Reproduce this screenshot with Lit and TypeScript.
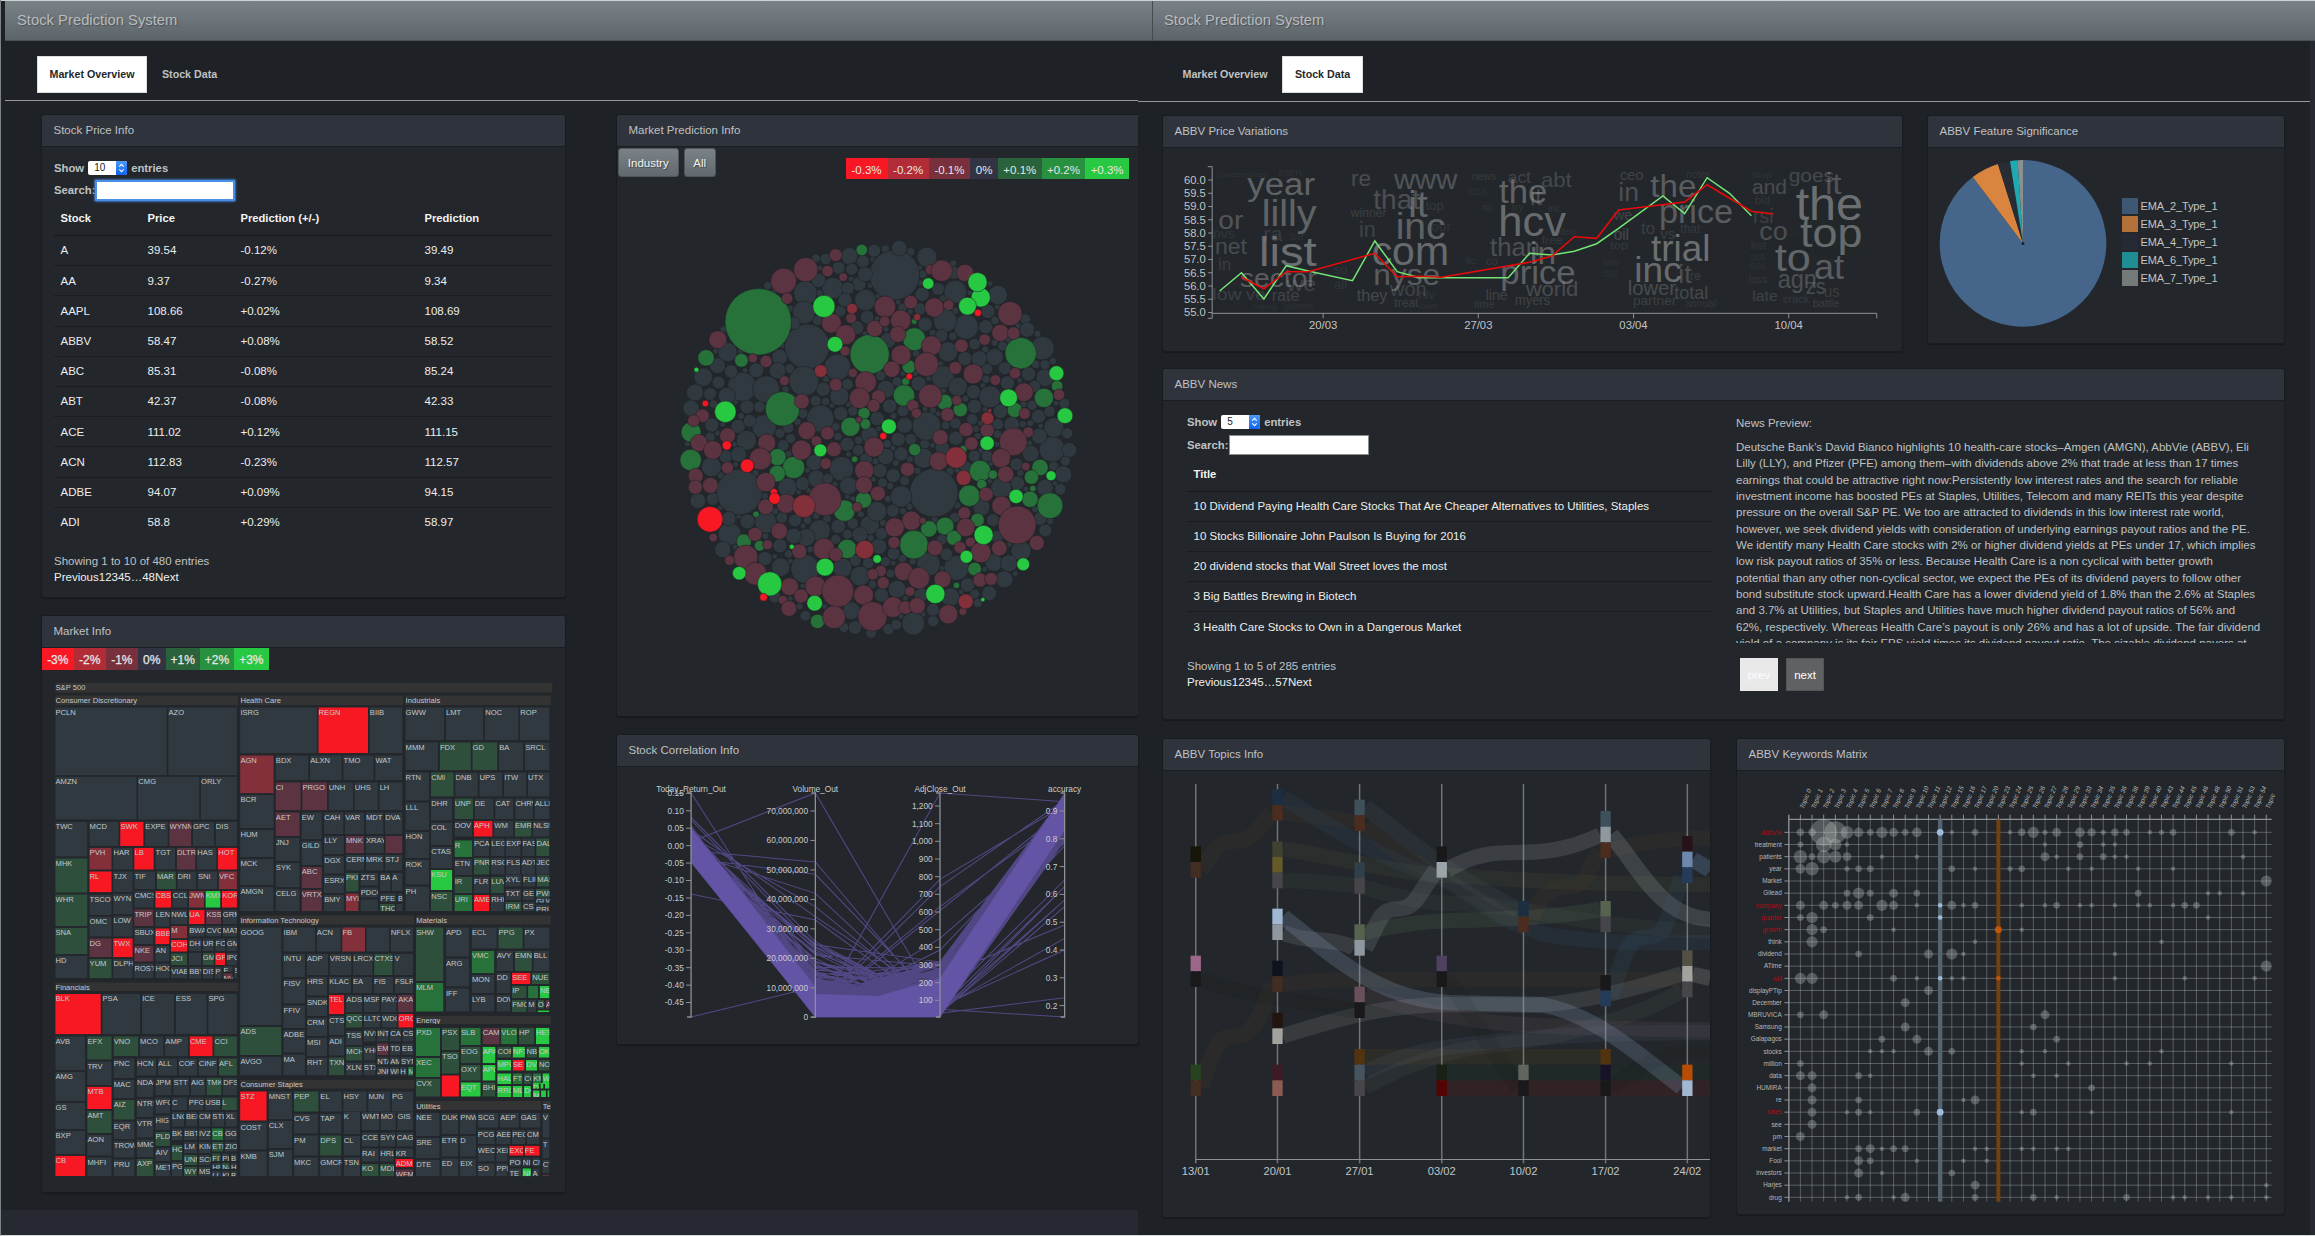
import { LitElement, html, svg, css } from "lit";
import { customElement, state } from "lit/decorators.js";
import { classMap } from "lit/directives/class-map.js";

/* ---------- shared data ---------- */

const FILL: Record<string, string> = {
  s: "#2f393f", d: "#5c3340", m: "#84303a", R: "#f81824",
  g: "#2d4f3c", k: "#27723a", G: "#27c943",
};
const SCALE = ["#f81824", "#b12c37", "#77303c", "#323443", "#2a633b", "#279140", "#27c943"];

const STOCKS = [
  ["A", "39.54", "-0.12%", "39.49"], ["AA", "9.37", "-0.27%", "9.34"],
  ["AAPL", "108.66", "+0.02%", "108.69"], ["ABBV", "58.47", "+0.08%", "58.52"],
  ["ABC", "85.31", "-0.08%", "85.24"], ["ABT", "42.37", "-0.08%", "42.33"],
  ["ACE", "111.02", "+0.12%", "111.15"], ["ACN", "112.83", "-0.23%", "112.57"],
  ["ADBE", "94.07", "+0.09%", "94.15"], ["ADI", "58.8", "+0.29%", "58.97"],
];

const NEWS = [
  "10 Dividend Paying Health Care Stocks That Are Cheaper Alternatives to Utilities, Staples",
  "10 Stocks Billionaire John Paulson Is Buying for 2016",
  "20 dividend stocks that Wall Street loves the most",
  "3 Big Battles Brewing in Biotech",
  "3 Health Care Stocks to Own in a Dangerous Market",
];

const ARTICLE = [
  "Deutsche Bank’s David Bianco highlights 10 health-care stocks–Amgen (AMGN), AbbVie (ABBV), Eli",
  "Lilly (LLY), and Pfizer (PFE) among them–with dividends above 2% that trade at less than 17 times",
  "earnings that could be attractive right now:Persistently low interest rates and the search for reliable",
  "investment income has boosted PEs at Staples, Utilities, Telecom and many REITs this year despite",
  "pressure on the overall S&P PE. We too are attracted to dividends in this low interest rate world,",
  "however, we seek dividend yields with consideration of underlying earnings payout ratios and the PE.",
  "We identify many Health Care stocks with 2% or higher dividend yields at PEs under 17, which implies",
  "low risk payout ratios of 35% or less. Because Health Care is a non cyclical with better growth",
  "potential than any other non-cyclical sector, we expect the PEs of its dividend payers to follow other",
  "bond substitute stock upward.Health Care has a lower dividend yield of 1.8% than the 2.6% at Staples",
  "and 3.7% at Utilities, but Staples and Utilities have much higher dividend payout ratios of 56% and",
  "62%, respectively. Whereas Health Care’s payout is only 26% and has a lot of upside. The fair dividend",
  "yield of a company is its fair EPS yield times its dividend payout ratio. The sizable dividend payers at",
].join("\n");

/* ---------- treemap ---------- */

// H = group header, R = row of cells, C = column of cells.
// "R top bottom|left NAME colour|...|right" and "C left right|top NAME colour|...|bottom"
const TREE = `H 72 248 1490 278 S&P 500
H 72 286 593 316 Consumer Discretionary
R 322 525|72 PCLN|394 AZO|594
R 530 659|72 AMZN|308 CMG|487 ORLY|594
C 72 168|665 TWC|775 MHK g|883 WHR g|983 SNA g|1068 HD|1140
R 665 738|169 MCD|257 SWK R|328 EXPE|397 WYNN d|464 GPC|529 DIS|594
R 743 809|169 PVH m|237 HAR|297 LB R|357 TGT|418 DLTR d|476 HAS|536 HOT R|594
R 814 877|169 RL R|237 TJX|297
R 814 868|297 TIF|361 MAR g|420 DRI|478 SNI|538 VFC m|594
C 169 237|885 TSCO|950 OMC|1015 DG d|1077 YUM g|1140
C 237 297|881 WYN|948 LOW|1015 TWX R|1077 DLPH|1140
C 297 356|873 CMCS|928 TRIP d|983 SBUX|1038 NKE d|1090 ROST|1140
R 873 923|357 CBS R|406 CCL|453 JWN m|500 KMX G|547 KOR R|594
C 357 402|930 LEN|985 BBB R|1038 AN|1090 HOG|1140
R 930 972|402 NWL|453 UA R|502 KSS d|549 GRM|594
C 402 452|978 M m|1020 COH R|1060 JCI g|1101 VIAB|1140
R 978 1010|453 BWA|502 CVC|549 MAT|594
R 1015 1053|453 DHI|492 UR|528 FO|560 GM|594
R 1058 1095|453 -|492 GM g|528 GP R|560 IPC|594
R 1101 1136|453 BBY|492 DIS|527 P|551
R 1098 1116|551 F|582
R 1120 1136|551 NV d|582
R 1098 1136|582 S|594
H 599 286 1065 316 Health Care
R 322 460|599 ISRG|822 REGN R|968 BIIB|1066
C 599 699|466 AGN m|585 BCR|690 HUM|777 MCK|860 AMGN|938
R 466 541|700 BDX|798 ALXN|893 TMO|984 WAT|1066
R 547 631|700 CI d|776 PRGO d|851 UNH|925 UHS|996 LH|1066
C 700 773|637 AET d|713 JNJ|788 SYK|866 CELG|938
C 774 836|637 EW|722 GILD|801 ABC d|870 VRTX d|938
R 637 703|838 CAH|898 VAR|957 MDT|1012 DVA|1066
C 838 899|708 LLY|768 DGX|826 ESRX|885 BMY|938
R 708 760|900 MNK d|957 XRAY|1013 - d|1066
R 765 812|900 CERN|957 MRK|1012 STJ|1066
C 900 941|818 PKI g|880 MYL m|938
R 818 874|998 BA|1032 A|1066
C 942 996|818 ZTS|862 PDCO|898 -|938
R 880 906|998 PFE|1048 B|1066
R 911 934|998 THC g|1044 -|1066
H 1070 286 1485 316 Industrials
R 322 421|1070 GWW|1185 LMT|1297 NOC|1397 ROP|1485
R 427 511|1070 MMM|1168 FDX g|1261 GD g|1337 BA|1411 SRCL|1485
C 1070 1142|517 RTN|607 LLL|695 HON|779 ROK|859 PH|938
R 517 590|1143 CMI g|1212 DNB|1281 UPS|1351 ITW|1419 UTX|1485
C 1143 1208|595 DHR|667 COL|741 CTAS|810 KSU G|875 NSC g|938
R 595 657|1210 UNP g|1267 DE|1326 CAT|1383 CHRW|1438 ALLE|1485
R 663 710|1210 DOV|1265 APH R|1323 WM|1382 EMR g|1434 NLSN|1485
C 1210 1265|721 R k|776 ETN|830 IR g|885 URI k|938
R 715 768|1265 PCA|1314 LEG|1357 EXP|1403 FAS|1443 DAL g|1485
R 773 824|1265 PNR g|1314 RSG|1357 FLS|1401 ADT|1443 JEC|1485
R 830 880|1265 FLR|1314 LUV g|1355
R 825 860|1355 XYL|1405 FLIR|1445 MAS g|1485
R 885 934|1265 AME R|1314 RHI|1355
R 866 900|1355 TXT|1405 GE|1442 PWR g|1485
R 905 934|1355 IRM g|1405 CSX|1442
R 890 908|1442 GLW|1485
R 913 934|1442 PRI|1485
H 599 946 1096 974 Information Technology
C 599 721|982 GOOG|1281 ADS g|1370 AVGO|1431
R 982 1055|722 IBM|817 ACN|890 FB m|959 -|1028 NFLX|1096
C 722 788|1061 INTU|1137 FISV|1216 FFIV|1290 ADBE|1363 MA|1431
R 1061 1125|789 ADP|854 VRSN|921 LRCX|981 CTXS g|1038 V|1096
C 789 851|1131 HRS|1192 SNDK|1253 CRM|1313 MSI|1374 RHT|1431
R 1131 1179|852 KLAC|920 EA|980 FIS|1040 FSLR|1096
C 852 900|1185 TEL R|1248 CTSH|1311 ADI|1372 TXN g|1431
R 1185 1236|901 ADSK|951 MSFT|1001 PAYX|1049 AKAM d|1096
R 1242 1283|901 QCO g|951 LLTC|1003 WDC|1050 ORC R|1096
C 901 951|1293 TSS|1340 MCH g|1387 XLNX|1431
R 1287 1325|951 NVI|989 INT|1026 CA|1062 CS|1096
R 1330 1365|989 EM d|1026 TD|1060 EBA|1096
C 951 989|1337 YHO|1387 STX|1431
R 1370 1395|989 NTA|1026 AM|1057 SYM|1096
R 1400 1427|989 JNP|1026 WU|1055 H|1078 M k|1096
H 1100 946 1485 974 Materials
C 1100 1183|982 SHW g|1148 MLM k|1240
C 1185 1256|982 APD|1075 ARG|1165 IFF|1240
R 982 1046|1259 ECL|1335 PPG g|1409 PX|1485
C 1259 1328|1053 VMC k|1125 MON|1185 LYB|1240
R 1053 1113|1330 AVY|1382 EMN g|1435 BLL|1485
C 1330 1373|1118 DD|1185 DOW|1240
R 1118 1152|1374 SEE R|1431 NUE g|1485
R 1158 1195|1374 IP g|1420 - k|1453 NE G|1485
R 1200 1236|1374 FMC g|1420 M|1447
R 1200 1226|1447 OI g|1470 A d|1485
R 1231 1236|1447 - G|1485
H 1100 1247 1485 1272 Energy
C 1100 1173|1283 PXD k|1373 XEC k|1436 CVX g|1495
C 1174 1227|1283 PSX g|1356 TSO g|1426 - R|1495
C 1228 1289|1283 SLB k|1340 EOG g|1395 OXY g|1447 EQT G|1495
R 1283 1333|1290 CAM d|1343 VLO k|1393 HP g|1442 HES G|1485
C 1290 1331|1340 APA G|1395 APC G|1447 BHI g|1495
R 1340 1373|1332 COP g|1376 NFX G|1415 NB g|1450 OK G|1485
R 1380 1412|1332 MPC G|1376 SE R|1414 DV G|1450 NO g|1485
R 1420 1452|1332 HAL G|1376 FTI k|1408 CO g|1434 KM k|1461 W G|1485
R 1458 1491|1332 RRC G|1376 ML G|1408 DO G|1432
R 1448 1466|1434 D G|1455 - G|1468 - G|1485
R 1471 1491|1434 M G|1457 - G|1475 - G|1485
H 599 1439 1096 1466 Consumer Staples
C 599 679|1474 STZ R|1567 COST|1654 KMB|1733
C 680 751|1474 MNST|1562 CLX|1650 SJM|1733
R 1474 1535|752 PEP g|827 EL|893 HSY|964 MJN|1031 PG|1096
C 752 825|1541 CVS|1606 PM|1672 MKC|1733
C 827 892|1541 TAP|1606 DPS g|1672 GMCR|1733
C 894 945|1536 K|1608 CL|1672 TSN|1733
R 1536 1590|946 WMT|999 MO|1047 GIS|1096
R 1597 1640|946 CCE|998 SYY|1045 CAG|1096
R 1645 1685|946 RAI|998 HRL|1042
R 1645 1671|1042 KR|1096
R 1692 1729|946 KO g|998 MDLZ g|1042
R 1677 1702|1042 ADM R|1096
R 1708 1729|1042 WFM d|1096
H 1100 1503 1457 1530 Utilities
H 1461 1503 1485 1530 Tel
C 1100 1172|1538 NEE|1613 SRE|1680 DTE|1733
C 1173 1225|1538 DUK|1608 ETR|1675 ED|1733
C 1226 1276|1538 PNW|1608 D|1675 EIX|1733
R 1538 1583|1276 SCG|1340 AEP|1398 GAS|1459
R 1590 1632|1276 PCG|1329 AEE|1374 PEG|1416 CM|1457
R 1637 1685|1276 WEC|1329 XEL|1366
R 1637 1667|1366 EXC R|1410 FE R|1457
R 1690 1729|1276 SO|1329 PPL|1366
R 1674 1700|1366 POM|1404 NI|1432 CN|1457
R 1705 1729|1366 TE|1404 NR G|1432 A|1457
C 1461 1485|1538 V|1618 T|1680 CT|1724 - d|1733
H 72 1147 593 1173 Financials
R 1182 1303|72 BLK R|206 PSA|319 ICE|415 ESS|508 SPG|594
C 72 161|1309 AVB|1415 AMG|1508 GS|1593 BXP|1667 CB R|1733
C 163 237|1309 EFX g|1384 TRV|1460 MTB R|1532 AMT g|1604 AON|1672 MHFI|1733
R 1309 1369|238 VNO g|313 MCO|385 AMP|455 CME R|525 CCI g|594
C 238 302|1375 PNC|1439 MAC|1500 AIZ g|1564 EQR|1623 TROW|1678 PRU|1733
R 1375 1427|304 HCN|364 ALL|423 COF|480 CINF|538 AFL g|594
C 304 356|1433 NDAQ|1496 NTRS|1557 VTR|1618 MMC|1676 AXP g|1733
R 1433 1486|357 JPM|408 STT|458 AIG|503 TMK g|550 DFS|594
C 357 403|1492 WFC|1546 HIG|1595 PLD g|1643 AIV|1688 MET|1733
R 1492 1530|404 C|452 PFG|499 USB|547 L g|594
R 1535 1580|404 LNC|444 BEN|481 CM|519 STI|557 XL|594
R 1585 1620|404 BK|439 BBT|481 IVZ|519 CB k|555 GG|594
C 404 438|1635 HC g|1685 PG|1733
C 439 480|1626 LM|1664 UNM g|1700 WY g|1733
C 481 519|1626 KIM|1664 SCH|1700 MS|1733
R 1626 1655|519 ETF g|555 ZIO|594
R 1660 1683|519 FIT g|547 PI|572 B|594
R 1688 1707|519 HF|547 NA g|572 H|594
R 1712 1729|519 LU|547 KI|572 B|594`;

interface Cell { x: number; y: number; w: number; h: number; name: string; fill: string; head?: boolean }

function parseTree(): Cell[] {
  const kx = 1 / 2.851, ky = 1 / 3, out: Cell[] = [];
  const add = (x0: number, y0: number, x1: number, y1: number, name: string, fill: string, head = false) =>
    out.push({ x: 30 + x0 * kx, y: 600 + y0 * ky, w: (x1 - x0) * kx, h: (y1 - y0) * ky, name, fill, head });
  for (const line of TREE.split("\n")) {
    if (line[0] === "H") {
      const p = line.split(" ");
      add(+p[1], +p[2], +p[3], +p[4], p.slice(5).join(" "), "#333333", true);
      continue;
    }
    const parts = line.split("|");
    const [kind, a, b] = parts[0].split(" ");
    const items = parts.slice(1).map((s) => s.split(" "));
    for (let i = 0; i < items.length - 1; i++) {
      const [pos, name, c] = items[i];
      const from = +pos, to = +items[i + 1][0] - 4;
      const label = name === "-" ? "" : name;
      const fill = FILL[c ?? "s"];
      if (kind === "R") add(from, +a, to, +b, label, fill);
      else add(+a, from, +b - 4, to - 1, label, fill);
    }
  }
  return out;
}
const CELLS = parseTree();

/* ---------- bubbles ---------- */

const BUBBLES: Record<string, string> = {
  s: "825,490,70 838,415,22 580,690,63 915,440,28 995,537,32 1025,635,35 966,618,33 575,540,33 571,595,32 652,527,30 571,787,42 665,748,37 398,803,41 465,810,38 355,828,24 617,892,38 460,915,34 960,776,32 914,913,40 1239,695,33 1114,546,27 390,1098,64 935,1100,68 676,1032,34 906,1003,28 1266,978,36 1314,980,21 1297,1048,24 363,1215,32 464,1182,31 574,1313,40 615,1205,30 877,1466,32 920,1300,33 998,1310,35 1179,1262,28 1132,1342,24 1103,1295,25 1145,1297,24 1123,1086,29 843,1110,30 755,1190,27 775,1152,28 312,1027,28 410,953,28 289,776,26 266,819,24 255,863,23 357,706,27 329,744,22 743,560,30 725,515,20 742,488,21 698,437,24 768,422,18 728,1333,28 679,1310,27 506,1308,26 344,1259,23 1271,917,28 1092,831,31 1002,803,27 974,705,28 670,829,27 800,810,25 577,1225,25 542,1221,22 704,1430,25 759,1492,15 714,1477,19 808,1482,16 683,1477,14 832,1370,25 981,1392,26 1090,1381,21 600,1015,23 606,1060,24 525,1085,27 696,1080,25 800,998,23 1105,720,24 1200,767,20 1246,777,25 1062,724,22 274,1122,22 1247,1205,18 1232,1172,19 1289,1090,16 1246,1085,23 1246,741,14 1191,614,15 1196,643,21 1308,933,16 1300,850,15 933,1459,16 830,1469,15 575,1444,15 632,445,16 605,443,12 490,1392,17 788,1386,20 1058,1408,13 991,484,18 806,673,22 543,625,18 503,720,22 612,505,20 668,470,18 705,474,17 694,527,18 896,585,17 847,582,13 748,608,19 720,637,19 686,560,20 911,628,20 956,660,18 892,794,21 958,974,20 1024,1028,17 1084,997,17 1048,997,17 1153,909,22 853,911,22 755,938,24 745,1006,18 527,917,16 513,967,16 419,898,18 352,998,19 388,992,22 313,910,20 308,823,18 332,791,18 367,760,19 438,757,21 497,758,23 1112,1222,17 1100,1176,18 994,1169,15 957,1231,15 970,1272,18 822,1270,18 781,1250,22 728,1217,22 788,1214,17 361,1172,20 413,1180,21 509,1169,16 567,1074,19 638,1060,15 1068,1140,24 1206,990,23 1230,941,22 1166,1020,18 1217,802,17 1259,872,16 900,1386,20 932,1427,18 1029,1358,20",
  k: "443,621,93 733,420,16 396,729,19 297,722,23 755,712,55 511,865,48 880,670,32 865,747,19 851,827,30 856,788,11 880,620,8 965,846,22 1009,867,20 1178,709,44 1161,868,21 1243,834,27 1280,801,16 739,877,17 743,907,15 701,915,27 255,930,28 254,1008,30 497,1000,24 542,1029,31 496,1046,23 881,979,17 713,1006,9 1018,977,10 1064,1039,30 1100,1049,13 1069,1076,14 1034,1108,30 1232,1029,23 1208,1056,20 1212,1088,9 1204,1118,23 1260,1136,36 738,1120,23 684,1150,30 437,1160,9 1057,1176,19 966,1193,25 921,1201,23 991,1226,21 879,1245,40 403,1236,21 447,1248,15 692,1257,27 1049,1313,19 998,1359,9 609,1460,20",
  d: "576,475,34 514,507,36 524,556,16 660,434,18 637,479,16 681,496,12 925,475,14 957,478,30 1022,484,24 1148,598,34 870,566,19 936,581,27 976,574,15 798,579,30 842,617,29 648,625,28 703,611,15 688,657,28 769,640,23 797,620,15 834,656,23 1121,652,24 1158,653,18 1077,671,16 330,671,25 428,723,13 465,732,17 686,703,14 843,714,28 928,688,28 1012,688,19 914,740,34 817,754,23 708,764,13 995,750,18 1045,767,28 1162,765,16 1107,784,15 516,786,14 660,797,18 744,790,30 727,835,29 780,831,20 766,856,18 925,829,33 999,841,14 876,856,17 886,877,14 1187,818,26 1285,825,16 1189,878,16 973,881,19 1025,923,20 1084,925,20 1199,930,15 565,844,21 287,884,19 262,898,17 725,895,9 357,940,22 579,926,25 637,933,19 606,955,15 277,960,24 316,980,26 467,960,25 655,978,21 564,980,28 767,972,28 953,945,22 1157,957,39 1040,962,19 948,1011,26 1123,1003,27 1192,1026,12 449,1005,31 357,1030,17 632,1018,16 740,1037,27 861,1034,20 268,1052,21 267,1084,20 309,1079,22 464,1070,27 739,1078,24 1136,1048,23 1081,1104,20 778,1102,21 630,1118,46 521,1130,27 464,1139,22 720,1140,14 1124,1136,27 1168,1190,53 1020,1157,18 872,1178,27 825,1197,27 903,1178,10 1024,1197,26 502,1207,23 434,1216,20 317,1225,12 1223,1240,21 1118,1255,22 823,1239,17 938,1254,22 1037,1238,14 1008,1253,17 1066,1267,29 469,1245,14 558,1264,21 627,1257,30 660,1273,19 408,1280,34 363,1289,14 435,1326,32 850,1320,26 893,1339,30 959,1342,24 786,1319,16 764,1328,16 793,1352,17 1064,1344,20 1095,1341,18 531,1363,25 603,1362,29 563,1389,20 666,1375,45 738,1386,28 868,1376,14 512,1400,13 529,1424,22 655,1448,32 763,1446,41 820,1420,29 855,1421,19 888,1416,23 975,1440,27 1016,1432,11",
  m: "706,584,15 888,608,10 618,759,18 1085,891,18 1091,870,6 997,1001,30 1018,1058,21 571,1137,32 741,1259,26 1024,1404,21",
  G: "627,578,31 919,514,16 1066,553,27 1057,510,27 1029,577,25 658,684,22 1278,765,21 1144,834,25 351,873,30 1302,884,22 809,914,21 617,981,18 1084,961,20 270,755,7 1263,1052,14 1165,1110,20 1074,1218,27 1026,1279,18 1185,1300,18 776,1285,12 537,1251,7 630,1308,25 390,1325,19 475,1355,34 601,1409,22 939,1383,27 1072,1399,6",
  R: "1058,596,10 866,774,9 295,850,9 355,967,13 412,1024,19 793,941,10 487,1098,10 489,1116,16 308,1174,36 458,1392,11",
};

function packBubbles(): [number, number, number, string][] {
  const listed: [number, number, number, string][] = [];
  for (const c of Object.keys(BUBBLES))
    for (const t of BUBBLES[c].split(" ")) {
      const [x, y, r] = t.split(",").map(Number);
      listed.push([x, y, r, c]);
    }
  const filler: [number, number, number, string][] = [];
  for (let r = 20; r >= 8; r -= 2)
    for (let y = 400; y < 1500; y += 7)
      for (let x = 230; x < 1330; x += 7) {
        const jx = x + ((y * 13) % 5), jy = y + ((x * 7) % 5);
        if (Math.hypot(jx - 780, jy - 950) > 545 - r) continue;
        let ok = true;
        for (const b of listed) if (Math.hypot(jx - b[0], jy - b[1]) < (r + b[2]) * 0.93) { ok = false; break; }
        if (ok) for (const b of filler) if (Math.hypot(jx - b[0], jy - b[1]) < r + b[2] - 1) { ok = false; break; }
        if (ok) filler.push([jx, jy, r, "s"]);
      }
  return [...filler, ...listed];
}
const PACKED = packBubbles();

/* ---------- parallel coordinates ---------- */

function rng(seed: number) {
  return () => {
    seed = (seed * 1664525 + 1013904223) % 4294967296;
    return seed / 4294967296;
  };
}
const PC_X = [255, 603, 952, 1301];
function correlationLines(): string {
  const rnd = rng(11);
  const lines: number[][] = [
    [219, 800, 870, 240], [365, 219, 860, 230], [372, 892, 219, 245], [392, 426, 870, 300],
    [415, 463, 850, 340], [400, 520, 870, 280], [350, 560, 865, 310], [330, 590, 840, 300],
    [522, 600, 872, 280], [891, 800, 880, 500], [292, 665, 860, 300], [300, 680, 850, 330],
    [420, 860, 478, 255], [380, 870, 500, 240], [390, 865, 560, 290], [400, 870, 572, 270],
    [370, 880, 655, 330], [360, 875, 690, 300], [400, 880, 868, 891], [350, 850, 880, 833],
    [360, 880, 865, 655], [370, 850, 860, 690], [380, 840, 770, 615], [390, 850, 880, 560],
    [340, 830, 870, 540], [350, 860, 865, 500], [352, 860, 850, 480], [410, 700, 880, 540],
  ];
  for (let i = 0; i < 460; i++) {
    const a = 370 + (rnd() + rnd() + rnd() - 1.5) * 42;
    const b = 891 - Math.min(220, -Math.log(1 - rnd()) * 42);
    const c = 891 - Math.min(165, -Math.log(1 - rnd()) * 50);
    const d = 222 + Math.min(200, Math.pow(rnd(), 2) * 110 + -Math.log(1 - rnd()) * 12);
    lines.push([a, b, c, d]);
  }
  return lines
    .map((l) => "M" + l.map((y, i) => `${PC_X[i]} ${y.toFixed(0)}`).join("L"))
    .join("");
}
const PC_PATH = correlationLines();
const PC_AXES: { title: string; ticks: [string, number][] }[] = [
  { title: "Today_Return_Out", ticks: Array.from({ length: 13 }, (_, i) => [(0.15 - i * 0.05).toFixed(2).replace("-0.00", "0.00"), 220 + i * 52.3] as [string, number]) },
  { title: "Volume_Out", ticks: Array.from({ length: 8 }, (_, i) => [i === 7 ? "0" : `${7 - i}0,000,000`, 273 + i * 88.4] as [string, number]) },
  { title: "AdjClose_Out", ticks: Array.from({ length: 12 }, (_, i) => [(1200 - i * 100).toLocaleString("en-US"), 258 + i * 53] as [string, number]) },
  { title: "accuracy", ticks: Array.from({ length: 8 }, (_, i) => [(0.9 - i * 0.1).toFixed(1), 273 + i * 83.4] as [string, number]) },
];

/* ---------- price chart ---------- */

// word, left, baseline, width, size, opacity
const WORDS: [string, number, number, number, number, number][] = [
  ["year", 127, 105, 203, 92, 0.33], ["lilly", 170, 198, 165, 108, 0.33], ["list", 162, 318, 173, 122, 0.4],
  ["or", 40, 207, 75, 78, 0.25], ["net", 30, 282, 96, 66, 0.2], ["in", 40, 330, 38, 50, 0.12],
  ["sector", 105, 380, 230, 80, 0.3], ["we", 245, 392, 88, 60, 0.15], ["low", 22, 420, 88, 52, 0.13],
  ["ve", 122, 420, 60, 52, 0.12], ["rate", 200, 424, 84, 48, 0.15], ["ra", 175, 243, 58, 62, 0.12],
  ["nvs", 24, 235, 65, 38, 0.08], ["spacemoney", 36, 50, 150, 24, 0.05], ["earn", 220, 48, 70, 30, 0.05],
  ["rating", 145, 446, 70, 24, 0.05], ["generic", 236, 446, 90, 26, 0.05], ["sir", 255, 240, 45, 34, 0.05],
  ["re", 438, 77, 60, 66, 0.2], ["www", 567, 88, 190, 84, 0.25], ["that", 505, 146, 140, 82, 0.22],
  ["it", 610, 172, 58, 108, 0.35], ["top", 662, 150, 54, 38, 0.1], ["inc", 572, 238, 150, 108, 0.33],
  ["in", 462, 230, 50, 66, 0.15], ["winner", 437, 172, 108, 36, 0.13], ["com", 500, 314, 232, 120, 0.37],
  ["nyse", 505, 374, 200, 88, 0.3], ["won", 555, 408, 110, 60, 0.15], ["they", 455, 424, 92, 48, 0.18],
  ["treat", 568, 440, 72, 38, 0.13], ["so", 387, 342, 40, 36, 0.08], ["all", 388, 388, 38, 36, 0.08],
  ["hiv", 640, 416, 50, 38, 0.08], ["our", 678, 212, 60, 40, 0.07], ["lower", 640, 446, 60, 26, 0.05],
  ["loss", 790, 106, 55, 30, 0.05], ["llc", 782, 312, 30, 28, 0.06], ["co", 842, 314, 36, 32, 0.09],
  ["the", 882, 128, 145, 98, 0.33], ["hcv", 880, 227, 203, 128, 0.38], ["act", 908, 68, 70, 50, 0.15],
  ["abt", 1008, 82, 92, 62, 0.18], ["it", 975, 136, 36, 70, 0.2], ["than", 855, 288, 150, 80, 0.22],
  ["in", 975, 312, 78, 96, 0.32], ["free", 1010, 252, 64, 34, 0.1], ["price", 886, 372, 226, 98, 0.32],
  ["world", 962, 408, 158, 62, 0.2], ["line", 842, 420, 66, 46, 0.15], ["myers", 930, 436, 105, 42, 0.15],
  ["time", 808, 444, 60, 34, 0.1], ["news", 800, 60, 74, 32, 0.1], ["ns", 832, 152, 30, 30, 0.08],
  ["try", 920, 154, 36, 32, 0.07], ["inc", 1028, 156, 40, 32, 0.07], ["idea", 1060, 224, 52, 30, 0.06],
  ["ceo", 1245, 60, 70, 42, 0.15], ["in", 1240, 124, 62, 80, 0.22], ["the", 1336, 110, 138, 94, 0.3],
  ["price", 1362, 190, 222, 98, 0.3], ["notes", 1443, 54, 72, 32, 0.08], ["we", 1226, 180, 56, 42, 0.15],
  ["oil", 1226, 240, 46, 50, 0.18], ["to", 1308, 222, 42, 48, 0.13], ["vs", 1366, 238, 44, 44, 0.13],
  ["that", 1426, 220, 60, 36, 0.1], ["top", 1215, 268, 54, 34, 0.1], ["trial", 1338, 304, 178, 108, 0.4],
  ["inc", 1288, 366, 142, 104, 0.38], ["it", 1420, 368, 40, 80, 0.22], ["re", 1455, 360, 32, 36, 0.12],
  ["lower", 1268, 404, 145, 58, 0.2], ["total", 1408, 416, 102, 54, 0.18], ["partner", 1284, 436, 130, 40, 0.13],
  ["annual", 1440, 442, 94, 32, 0.08], ["low", 1195, 318, 44, 30, 0.05], ["cost", 1190, 350, 46, 30, 0.05],
  ["goes", 1751, 67, 136, 56, 0.18], ["and", 1641, 102, 105, 60, 0.2], ["it", 1861, 102, 48, 90, 0.25],
  ["the", 1772, 180, 202, 138, 0.4], ["bid", 1650, 132, 45, 34, 0.08], ["rsi", 1644, 188, 62, 60, 0.13],
  ["co", 1663, 240, 85, 76, 0.22], ["top", 1785, 262, 187, 124, 0.38], ["to", 1709, 332, 108, 114, 0.35],
  ["at", 1827, 357, 90, 104, 0.3], ["agn", 1718, 384, 118, 78, 0.22], ["zs", 1802, 402, 60, 66, 0.2],
  ["us", 1857, 410, 47, 50, 0.12], ["late", 1642, 422, 76, 44, 0.15], ["crack", 1733, 430, 80, 32, 0.1],
  ["battle", 1823, 442, 80, 32, 0.12], ["lost", 1638, 266, 46, 32, 0.07], ["loss", 1632, 370, 54, 34, 0.08],
  ["stop", 1641, 55, 60, 28, 0.06], ["out", 1634, 300, 44, 30, 0.05], ["eps", 1634, 328, 48, 30, 0.05],
];
const GREEN = "140,873 184,818 229,897 274,797 318,813 407,842 452,723 497,815 541,833 720,833 763,760 808,765 853,754 898,731 942,685 1031,588 1075,641 1120,533 1165,580 1209,647";
const RED = "184,832 229,866 274,815 318,815 452,760 497,830 541,829 586,832 763,787 808,768 853,710 898,715 942,630 1075,606 1120,554 1209,634 1253,642";

/* ---------- topics ---------- */

const TOPIC_X = [125, 346, 568, 790, 1011, 1233, 1454];
const TOPIC_DATES = ["13/01", "20/01", "27/01", "03/02", "10/02", "17/02", "24/02"];
const NODES: [number, string][][] = [
  [[349, "#171507 #432c22"], [677, "#9c6789 #19191b"], [1004, "#27421e #432c22"]],
  [[178, "#1c2e42 #4b2d20"], [334, "#3f4230 #655a28 #46464a"], [536, "#a0b8d2 #8f989f"], [692, "#0f131e #432c22"], [848, "#221510 #a2a29f"], [1004, "#3d1b25 #8b5a52"]],
  [[209, "#3e505a #4b2d20"], [397, "#303f49 #46464a"], [583, "#57624f #8f989f"], [770, "#69505a #19191b"], [957, "#51340f #45545f #46464a"]],
  [[349, "#19191b #9aa4a9"], [677, "#4f4260 #19191b"], [1004, "#182114 #560303"]],
  [[513, "#1c2e42 #4b2d20"], [1004, "#62655f #19191b"]],
  [[243, "#3e505a #8f989f #4b2d20"], [513, "#57624f #46464a"], [735, "#19191b #243c5a"], [957, "#51340f #181229 #19191b"]],
  [[318, "#28121a #6c88ad #243c5a"], [661, "#535046 #a2a29f #46464a"], [1004, "#b84c05 #a0b8d2"]],
];
const RIBBONS: [string, string, number][] = [
  ["M139 420C180 350 190 333 235 333S290 300 332 247", "#b06a20", 0.05],
  ["M360 247C420 262 500 258 554 280", "#b06a20", 0.05],
  ["M582 285C680 400 800 430 998 582", "#b06a20", 0.05],
  ["M1025 582C1050 510 1075 471 1130 471S1180 420 1219 362", "#b06a20", 0.06],
  ["M1247 360C1330 335 1420 325 1516 325", "#b06a20", 0.06],
  ["M360 203C450 260 600 380 780 440C900 500 950 600 1120 622S1400 640 1516 637", "#3d6aa0", 0.1],
  ["M582 230C680 310 760 400 998 540", "#6d93a8", 0.08],
  ["M360 357C500 380 640 425 790 435S1100 462 1516 464", "#8a8a4a", 0.07],
  ["M360 452C440 452 500 460 554 466C680 500 720 520 860 522S1150 590 1516 604", "#8c9a90", 0.06],
  ["M582 607C660 585 740 573 830 571S1100 565 1219 538", "#7f9a72", 0.12],
  ["M360 607C420 640 500 620 554 655", "#b8c0c8", 0.14],
  ["M582 655C620 580 620 537 670 537S720 500 776 420", "#b8c0c8", 0.15],
  ["M804 420C880 370 930 367 1010 367S1150 350 1219 315", "#b8c0c8", 0.16],
  ["M1247 313C1330 420 1380 560 1516 568", "#b8c0c8", 0.18],
  ["M360 560C500 680 620 812 820 818S1040 822 1060 824C1200 850 1330 980 1440 1073", "#88a4bf", 0.24],
  ["M360 918C500 870 620 824 820 824S1040 828 1060 824C1180 815 1330 770 1440 731", "#b4bab8", 0.14],
  ["M1468 733L1516 745", "#b4bab8", 0.2],
  ["M139 1073C180 930 190 918 235 918S300 860 332 763", "#b06a20", 0.05],
  ["M360 763C460 750 520 748 640 748H1440", "#b06a20", 0.05],
  ["M582 795C680 830 760 850 880 870S1200 895 1516 900", "#a07080", 0.1],
  ["M582 1028C700 960 800 950 930 935S1250 905 1516 908", "#7888b0", 0.09],
  ["M582 1073C680 1010 800 960 930 945S1300 880 1440 780", "#909890", 0.07],
  ["M1247 803C1290 640 1300 620 1350 620S1400 560 1440 440", "#3a78a0", 0.1],
  ["M1468 388L1516 420", "#6c98cd", 0.25],
  ["M139 748C260 800 340 800 554 842", "#101418", 0.14],
  ["M804 750C880 850 930 980 998 1073", "#101418", 0.1],
  ["M1247 1073C1330 1000 1420 950 1516 970", "#101418", 0.1],
];

/* ---------- keywords matrix ---------- */

const TOPIC_IDS = [0, 1, 2, 3, 4, 5, 6, 7, 8, 9, 10, 11, 12, 15, 16, 17, 20, 23, 24, 25, 26, 27, 28, 29, 33, 34, 35, 36, 38, 39, 40, 43, 44, 45, 46, 48, 50, 51, 53, 54];
// "keyword|column:radius ..." where a leading * marks a highlighted keyword
const MATRIX = `*AbbVie|0:10 1:10 2:36 3:30 4:17 5:13 6:9 7:15 8:12 9:9 10:13 12:9 13:6 15:9 18:6 19:10 20:15 21:7 22:12 24:13 25:11 26:7 27:10 28:9 30:6 31:7 32:9 37:9 39:6
treatment|0:8 2:21 3:16 4:6 21:6 24:9 26:6 27:6
patients|0:18 1:9 2:18 3:16 4:12 7:6 10:6 21:12 22:6 24:9 26:9 27:6 28:6 38:6
year|0:13 1:18 4:7 5:9 6:9 13:9 15:6 18:7 19:9 23:6 25:6 29:6 32:6
Market|40:15
Gilead|4:9 5:15 6:9 8:12 10:9 29:9 35:6 36:6 38:6
*company|0:12 2:12 3:9 4:12 5:12 7:15 8:12 10:6 12:6 13:12 14:6 15:9 19:6 21:6 22:9 24:6 25:6 27:6 29:6 30:6 32:6 33:9 34:9
*quarter|0:9 1:15 6:9 12:6 35:6
*growth|1:15 2:9 8:6 17:9 19:6
think|1:15 15:6 31:6
dividend|5:9 11:12 13:15 14:6 27:6
ATime|40:15
*will|0:15 1:15 8:9 10:6 12:6 13:6 14:6 17:6 27:6 33:6 39:6
displayPTip|11:12
December|9:12
MBRUVICA|0:9 2:12 21:12
Samsung|9:12 20:9
Galapagos|7:9 10:12 22:9
stocks|6:6 7:6 8:6 11:12 13:9 19:6 21:6 31:6
million|0:9 19:6 23:6 28:6 30:6 37:6
data|0:12 1:12 5:9 6:6 20:6 22:6
HUMIRA|1:12 25:9
re|1:12 5:9 14:6 15:12
*sales|1:12 4:6 5:9 6:6 10:9 12:9 19:6 20:9 25:6 37:6
see|1:12
pm|0:12
market|5:9 6:12 7:6 8:9 9:9 15:6 16:6 19:6 20:6 22:6 23:6
Fool|5:12 6:9 10:6 14:6 16:6
investors|5:12 7:6 13:9
Harjes|15:12 40:6
drug|4:6 5:9 8:6 9:12 15:9 20:9 22:6 28:9 32:6 33:6 35:6 37:6 40:6`.split("\n").map((row) => {
  const [name, dots] = row.split("|");
  return { hot: name[0] === "*", name: name.replace("*", ""), dots: dots.split(" ").map((d) => d.split(":").map(Number)) };
});

const PIE: [number, number, string][] = [
  [0, 322.9, "#45658a"], [322.9, 342.5, "#d9853f"], [342.5, 351, "#272c35"], [351, 356.3, "#1fa9b0"], [356.3, 360, "#8a908e"],
];
const PIE_KEYS: [string, string][] = [
  ["EMA_2_Type_1", "#3e5774"], ["EMA_3_Type_1", "#b4723a"], ["EMA_4_Type_1", "#262a34"], ["EMA_6_Type_1", "#1f8e94"], ["EMA_7_Type_1", "#747a78"],
];

@customElement("app-root")
export class AppRoot extends LitElement {
  static styles = css`
    :host {
      display: block; width: 2315px; height: 1236px; overflow: hidden;
      background: #1e2125; color: #bfc1c3;
      font: 11.5px/16.4px "Liberation Sans", Arial, sans-serif;
    }
    * { box-sizing: border-box; }
    svg { display: block; overflow: hidden; }
    .app { display: flex; flex-direction: column; height: 1236px; border-left: 1px solid #7d8386; border-bottom: 1px solid #d8d8d8; }
    .headers { display: flex; height: 41px; padding-left: 4px; border-top: 1px solid #cdd3d2; }
    .bar {
      height: 40px; padding: 9px 12px; font-size: 14.8px; line-height: 20px; color: #b9bcbe;
      background: linear-gradient(#798287, #6a7277 55%, #5c656a); border-bottom: 1px solid #4a5155;
      text-shadow: 1px 1px 1px rgba(0, 0, 0, 0.3);
    }
    .bar-left { width: 1147px; }
    .bar-right { flex: 1; border-left: 1px solid #454c50; padding-left: 11px; }
    .screens { display: flex; flex: 1; min-height: 0; }
    .left { width: 1137px; display: flex; flex-direction: column; }
    .right { flex: 1; display: flex; flex-direction: column; border-right: 5px solid #262932; }
    .tabs { display: flex; height: 60px; padding: 15px 0 0 32px; margin-left: 4px; border-bottom: 1px solid #97999b; }
    .right .tabs { height: 61px; margin-left: 0; }
    .tab { height: 37px; padding: 0 11.5px; line-height: 35px; font-size: 10.7px; font-weight: bold; border: 1px solid transparent; white-space: nowrap; }
    .tab + .tab { margin-left: 2.5px; }
    .tab.on { background: #fff; color: #24282b; border-color: #ddd; }
    .left-cols { display: flex; gap: 50px; padding: 13px 0 0 40px; height: 1109px; }
    .col { display: flex; flex-direction: column; gap: 17px; }
    .footband { height: 25px; background: #262932; }
    .panel { background: #23272b; border: 1px solid #191c1f; border-radius: 3px; overflow: hidden; box-shadow: 0 1px 1px rgba(0, 0, 0, 0.25); }
    .panel > .head { height: 32px; padding: 0 11.5px; line-height: 31px; background: #2f333c; border-bottom: 1px solid #1a1d21; color: #bfc1c3; }
    .p-price { width: 525px; height: 484px; }
    .p-market { width: 525px; height: 578px; }
    .p-pred { width: 522px; height: 603px; border-right: 0; border-top-right-radius: 0; }
    .p-corr { width: 523px; height: 311px; }
    .list { padding: 11px 12px 0; }
    .control { display: flex; align-items: center; font-weight: bold; font-size: 11.3px; height: 20px; white-space: pre; }
    .search { height: 24px; }
    .select { display: flex; width: 39px; height: 13.5px; margin: 0 4px; background: #fff; border-radius: 2px; color: #222; font-weight: normal; font-size: 10px; line-height: 14px; padding-left: 6px; justify-content: space-between; overflow: hidden; }
    .arrows { width: 11px; height: 14px; background: linear-gradient(#4b9bf8, #0f63f4); }
    .field { width: 140px; height: 21px; background: #fff; border: 1px solid #a4a4a4; }
    .field.focus { border: 2px solid #4a8ee6; box-shadow: 0 0 2px 1px #3c6fb5; border-radius: 1px; }
    .grid { display: grid; color: #ededed; }
    .row { display: grid; grid-template-columns: 87px 93px 184px 1fr; height: 30.2px; align-items: center; padding: 0 6.5px; border-top: 1px solid #1a1d20; }
    .row.th { border-top: 0; height: 33px; font-weight: bold; font-size: 11.2px; color: #f4f4f4; }
    .row.th + .row { border-top: 1.5px solid #15181a; }
    .row.one { grid-template-columns: 1fr; }
    .info { margin-top: 16px; height: 16.2px; }
    .pages { color: #f0f0f0; height: 17px; }
    .keys { display: flex; }
    .key { height: 22px; color: #e6e6e6; font-size: 12px; line-height: 25px; text-align: center; overflow: hidden; -webkit-text-stroke: 0.25px #e6e6e6; }
    .toolbar { display: flex; gap: 5px; padding: 1px 0 0 1px; height: 33px; color: #eee; }
    .btn { height: 29px; padding: 0 8.8px; line-height: 28px; border-radius: 3px; background: linear-gradient(#7a8288, #62696e); border: 1px solid #4f5559; color: #f2f2f2; text-shadow: 1px 1px 1px rgba(0, 0, 0, 0.4); }
    .toolbar .keys { margin: 10px 9px 0 auto; }
    .toolbar .key { height: 21px; font-size: 11.5px; line-height: 25px; -webkit-text-stroke: 0; }
    .stack { padding: 13px 0 0 24px; display: flex; flex-direction: column; gap: 18px; }
    .line { display: flex; align-items: flex-start; }
    .p-var { width: 741px; height: 237px; }
    .p-feat { width: 358px; height: 229px; margin-left: 24px; }
    .p-news { width: 1123px; height: 352px; margin-top: -2px; }
    .p-topics { width: 549px; height: 480px; }
    .p-words { width: 549px; height: 477px; margin-left: 25px; }
    .news { display: flex; }
    .news .list { width: 549px; padding: 11px 0 0 24px; }
    .news .row.th { height: 32.5px; }
    .news .info { margin-top: 16.5px; }
    .news .control { margin-bottom: 1px; }
    .news .field { height: 20.5px; border-color: #8b8b8b; border-width: 1.5px; margin-left: 1px; }
    .preview { padding: 14px 0 0 24px; width: 560px; }
    .article { margin: 7.5px 0 0; height: 204.5px; overflow: hidden; white-space: pre; line-height: 16.35px; }
    .pager { display: flex; gap: 8px; padding: 15px 0 0 4px; }
    .page-btn { width: 38px; height: 33px; line-height: 32px; text-align: center; background: #606162; color: #fff; border: 1px solid #555; }
    .page-btn.off { background: #e9e9e9; color: #fcfcfc; border-color: #e9e9e9; }
    text { font-family: "Liberation Sans", Arial, sans-serif; fill: #c2c4c6; }
    .cell-label { font-size: 7.6px; fill: #c5c9cb; }
    .axis { stroke: #8d9194; fill: none; }
    .axis-label { font-size: 8.3px; fill: #c9cbcc; }
    .corr { stroke: #6554a8; stroke-width: 3; fill: none; opacity: 0.72; }
    .kw { font-size: 6.4px; fill: #b5b7b9; }
    .kw.hot { fill: #b00a14; }
    .grid-line { stroke: #b9bfc2; stroke-width: 1; opacity: 0.36; }
    .mid { text-anchor: middle; }
    .end { text-anchor: end; }
  `;

  @state() private query = "";

  private panel(cls: string, title: string, body: unknown) {
    return html`<section class="panel ${cls}"><div class="head">${title}</div>${body}</section>`;
  }

  private tabs(active: number) {
    return html`<nav class="tabs">${["Market Overview", "Stock Data"].map(
      (t, i) => html`<div class=${classMap({ tab: true, on: i === active })}>${t}</div>`)}</nav>`;
  }

  private keys(labels: string[], widths: number[]) {
    return html`<div class="keys">${labels.map(
      (l, i) => html`<div class="key" style="width:${widths[i]}px;background:${SCALE[i]}">${l}</div>`)}</div>`;
  }

  private controls(size: string, focus: boolean) {
    return html`
      <div class="control"><span>Show</span>
        <span class="select">${size}<svg class="arrows" viewBox="0 0 11 14"><path d="M3.3 5.6 5.5 3.4l2.2 2.2M3.3 8.4l2.2 2.2 2.2-2.2" fill="none" stroke="#fff" stroke-width="1.1"/></svg></span>
        <span>entries</span></div>
      <div class="control search"><span>Search:</span><span class=${classMap({ field: true, focus })}>${this.query}</span></div>`;
  }

  private treemap() {
    return svg`${CELLS.map((c) => svg`
      <svg x=${c.x} y=${c.y} width=${c.w} height=${c.h}>
        <rect width=${c.w} height=${c.h} fill=${c.fill}></rect>
        <text class="cell-label" x="0.3" y=${c.head ? 7.7 : 7.4}>${c.name}</text>
      </svg>`)}`;
  }

  private bubbles() {
    return svg`<g transform="translate(600 100) scale(0.35714)" stroke="#1d2226" stroke-opacity="0.75" stroke-width="2">
      ${PACKED.map((b) => svg`<circle cx=${b[0]} cy=${b[1]} r=${b[2]} fill=${FILL[b[3]]}></circle>`)}</g>`;
  }

  private correlation() {
    const X = (v: number) => 600 + v / 2.8, Y = (v: number) => 720 + v / 3;
    return svg`
      <g transform="translate(600 720) scale(0.35714 0.33333)">
        <path d="M255 325L255 428 603 891 603 800 400 520Z M603 822L603 891 952 891 952 775 780 828Z M952 775L952 891 1301 330 1301 219Z" fill="#6352a3"></path>
        <path class="corr" d=${PC_PATH}></path>
      </g>
      ${PC_AXES.map((a, i) => svg`
        <path class="axis" d="M${X(PC_X[i]) - 4} ${Y(219)}H${X(PC_X[i])}V${Y(891)}H${X(PC_X[i]) - 4}" stroke-width="1.3"></path>
        <text class="axis-label mid" x=${X(PC_X[i])} y=${Y(217)}>${a.title}</text>
        ${a.ticks.map(([t, y]) => svg`
          <path class="axis" d="M${X(PC_X[i]) - 5} ${Y(y)}h5"></path>
          <text class="axis-label end" x=${X(PC_X[i]) - 7.3} y=${Y(y) + 2.9}>${t}</text>`)}`)}`;
  }

  private priceChart() {
    const X = (v: number) => 1150 + v / 2.0103, Y = (v: number) => v / 3;
    const pts = (s: string) => s.split(" ").map((p) => { const [x, y] = p.split(",").map(Number); return `${X(x).toFixed(1)},${Y(y).toFixed(1)}`; }).join(" ");
    return svg`
      ${WORDS.map(([w, x, y, len, size, o]) => svg`
        <text x=${1205 + x / 3} y=${160 + y / 3} textLength=${len / 3} lengthAdjust="spacingAndGlyphs" font-size=${size / 3} style="opacity:${o * 1.15}">${w}</text>`)}
      <path class="axis" d="M${X(116)} ${Y(500)}H${X(125)}V${Y(955)}H${X(116)} M${X(125)} ${Y(940)}H${X(1461)}V${Y(955)}"></path>
      ${Array.from({ length: 11 }, (_, i) => svg`
        <path class="axis" d="M${X(125) - 4} ${Y(540 + i * 39.75)}h4"></path>
        <text class="end" font-size="11.2" x=${X(112)} y=${Y(540 + i * 39.75) + 3.8}>${(60 - i * 0.5).toFixed(1)}</text>`)}
      ${["20/03", "27/03", "03/04", "10/04"].map((d, i) => svg`
        <path class="axis" d="M${X(348 + i * 312)} ${Y(940)}v5"></path>
        <text class="mid" font-size="11.3" x=${X(348 + i * 312)} y="329">${d}</text>`)}
      <polyline points=${pts(GREEN)} fill="none" stroke="#74e574" stroke-width="1.5"></polyline>
      <polyline points=${pts(RED)} fill="none" stroke="#e80a0a" stroke-width="1.6"></polyline>`;
  }

  private pie() {
    const cx = 2023, cy = 243.4, r = 83.3;
    const at = (deg: number) => {
      const a = ((deg - 90) * Math.PI) / 180;
      return `${(cx + r * Math.cos(a)).toFixed(2)} ${(cy + r * Math.sin(a)).toFixed(2)}`;
    };
    return svg`
      ${PIE.map(([a, b, c]) => svg`<path d="M${cx} ${cy}L${at(a)}A${r} ${r} 0 ${b - a > 180 ? 1 : 0} 1 ${at(b)}Z" fill=${c}></path>`)}
      <circle cx=${cx} cy=${cy} r="1.5" fill="#1b2026"></circle>
      ${PIE_KEYS.map(([t, c], i) => svg`
        <rect x="2122" y=${198 + i * 18} width="16" height="16" fill=${c}></rect>
        <text x="2140.5" y=${210 + i * 18} font-size="11" textLength="77">${t}</text>`)}`;
  }

  private topics() {
    const X = (v: number) => 1150 + v / 2.7034, Y = (v: number) => 730 + v / 3;
    return svg`
      <g transform="translate(1150 730) scale(0.36991 0.33333)">
        <rect x="582" y="957" width="637" height="47" fill="#a06a10" opacity="0.09"></rect>
        <rect x="804" y="1004" width="712" height="47" fill="#183020" opacity="0.3"></rect>
        <rect x="804" y="1051" width="712" height="47" fill="#601010" opacity="0.22"></rect>
        ${RIBBONS.map(([d, c, o]) => svg`<path d=${d} fill="none" stroke=${c} stroke-width="46" opacity=${o}></path>`)}
        ${TOPIC_X.map((x) => svg`<rect x=${x - 2} y="162" width="4" height="1138" fill="#9a9d9f" opacity="0.65"></rect>`)}
        <rect x="125" y="1287" width="1391" height="3" fill="#8d9194"></rect>
        ${NODES.map((col, i) => col.map(([y, colors]) => colors.split(" ").map((c, k) => svg`
          <rect x=${TOPIC_X[i] - 14} y=${y + k * 47} width="28" height="47" fill=${c}></rect>`)))}
      </g>
      ${TOPIC_DATES.map((d, i) => svg`<text class="mid" font-size="11.2" x=${X(TOPIC_X[i])} y=${Y(1335)}>${d}</text>`)}`;
  }

  private matrix() {
    const X = (v: number) => 1730 + v / 2.6803, Y = (v: number) => 730 + v / 3;
    const cx = (i: number) => X(190 + 31.22 * i), ry = (j: number) => Y(307 + 36.5 * j);
    const R = X(1453);
    return svg`
      <path class="axis" stroke-width="1.4" d="M${X(159)} ${Y(254)}V${Y(1415)} M${X(159)} ${Y(268)}H${R}"></path>
      ${Array.from({ length: 41 }, (_, i) => svg`
        <path class="grid-line" d="M${cx(i)} ${Y(268)}V${Y(1415)}"></path>
        <path class="axis" d="M${cx(i)} ${Y(254)}V${Y(268)}"></path>
        <text class="kw" font-style="italic" textLength=${i < 40 ? (TOPIC_IDS[i] > 9 ? 24 : 21) : 16} transform="translate(${cx(i) + 3} ${Y(238)}) rotate(-68)">${i < 40 ? `Topic ${TOPIC_IDS[i]}` : "Topic"}</text>`)}
      ${MATRIX.map((row, j) => svg`
        <path class="grid-line" d="M${X(159)} ${ry(j)}H${R}"></path>
        <path class="axis" d="M${X(147)} ${ry(j)}H${X(159)}"></path>
        <text class="kw end ${row.hot ? "hot" : ""}" x=${X(140)} y=${ry(j) + 2.2}>${row.name}</text>`)}
      <rect x=${cx(12) - 2.2} y=${Y(268)} width="4.4" height=${Y(1415) - Y(268)} fill="#54656f"></rect>
      <rect x=${cx(17) - 2} y=${Y(268)} width="4" height=${Y(1415) - Y(268)} fill="#74400f"></rect>
      <svg x=${X(19)} y=${Y(125)} width=${R - X(19)} height=${Y(1450) - Y(125)} viewBox="${X(19)} ${Y(125)} ${R - X(19)} ${Y(1450) - Y(125)}">
      ${MATRIX.map((row, j) => row.dots.map(([i, r]) => svg`
        <circle cx=${cx(i)} cy=${ry(j)} r=${r / 2.68}
          fill=${i === 12 ? "#9dbbdb" : i === 17 ? "#c4560a" : "#c8cccc"}
          opacity=${i === 12 || i === 17 ? 1 : 0.3}></circle>`))}
      </svg>`;
  }

  render() {
    return html`
      <div class="app">
        <div class="headers">
          <div class="bar bar-left">Stock Prediction System</div>
          <div class="bar bar-right">Stock Prediction System</div>
        </div>
        <div class="screens">
          <div class="left">
            ${this.tabs(0)}
            <div class="left-cols">
              <div class="col">
                ${this.panel("p-price", "Stock Price Info", html`
                  <div class="list">
                    ${this.controls("10", true)}
                    <div class="grid">
                      <div class="row th"><span>Stock</span><span>Price</span><span>Prediction (+/-)</span><span>Prediction</span></div>
                      ${STOCKS.map((r) => html`<div class="row">${r.map((v) => html`<span>${v}</span>`)}</div>`)}
                    </div>
                    <div class="info">Showing 1 to 10 of 480 entries</div>
                    <div class="pages">Previous12345…48Next</div>
                  </div>`)}
                ${this.panel("p-market", "Market Info", html`
                  ${this.keys(["-3%", "-2%", "-1%", "0%", "+1%", "+2%", "+3%"], [31.6, 32.3, 31.9, 28, 34, 34.4, 34.4])}
                  <svg width="523" height="522" viewBox="42 670 523 522">${this.treemap()}</svg>`)}
              </div>
              <div class="col">
                ${this.panel("p-pred", "Market Prediction Info", html`
                  <div class="toolbar"><div class="btn">Industry</div><div class="btn">All</div>
                    ${this.keys(["-0.3%", "-0.2%", "-0.1%", "0%", "+0.1%", "+0.2%", "+0.3%"], [42, 41.2, 41.4, 27.9, 43.6, 43.6, 43.8])}
                  </div>
                  <svg width="521" height="535" viewBox="617 180 521 535">${this.bubbles()}</svg>`)}
                ${this.panel("p-corr", "Stock Correlation Info", html`
                  <svg width="521" height="277" viewBox="617 767 521 277">${this.correlation()}</svg>`)}
              </div>
            </div>
            <div class="footband"></div>
          </div>
          <div class="right">
            ${this.tabs(1)}
            <div class="stack">
              <div class="line">
                ${this.panel("p-var", "ABBV Price Variations", html`
                  <svg width="739" height="203" viewBox="1163 148 739 203">${this.priceChart()}</svg>`)}
                ${this.panel("p-feat", "ABBV Feature Significance", html`
                  <svg width="356" height="195" viewBox="1928 148 356 195">${this.pie()}</svg>`)}
              </div>
              ${this.panel("p-news", "ABBV News", html`
                <div class="news">
                  <div class="list">
                    ${this.controls("5", false)}
                    <div class="grid">
                      <div class="row one th"><span>Title</span></div>
                      ${NEWS.map((t) => html`<div class="row one"><span>${t}</span></div>`)}
                    </div>
                    <div class="info">Showing 1 to 5 of 285 entries</div>
                    <div class="pages">Previous12345…57Next</div>
                  </div>
                  <div class="preview">
                    <div>News Preview:</div>
                    <div class="article">${ARTICLE}</div>
                    <div class="pager"><div class="page-btn off">prev</div><div class="page-btn">next</div></div>
                  </div>
                </div>`)}
              <div class="line">
                ${this.panel("p-topics", "ABBV Topics Info", html`
                  <svg width="547" height="446" viewBox="1163.5 771 547 446">${this.topics()}</svg>`)}
                ${this.panel("p-words", "ABBV Keywords Matrix", html`
                  <svg width="547" height="443" viewBox="1737.5 771 547 443">${this.matrix()}</svg>`)}
              </div>
            </div>
          </div>
        </div>
      </div>`;
  }
}
